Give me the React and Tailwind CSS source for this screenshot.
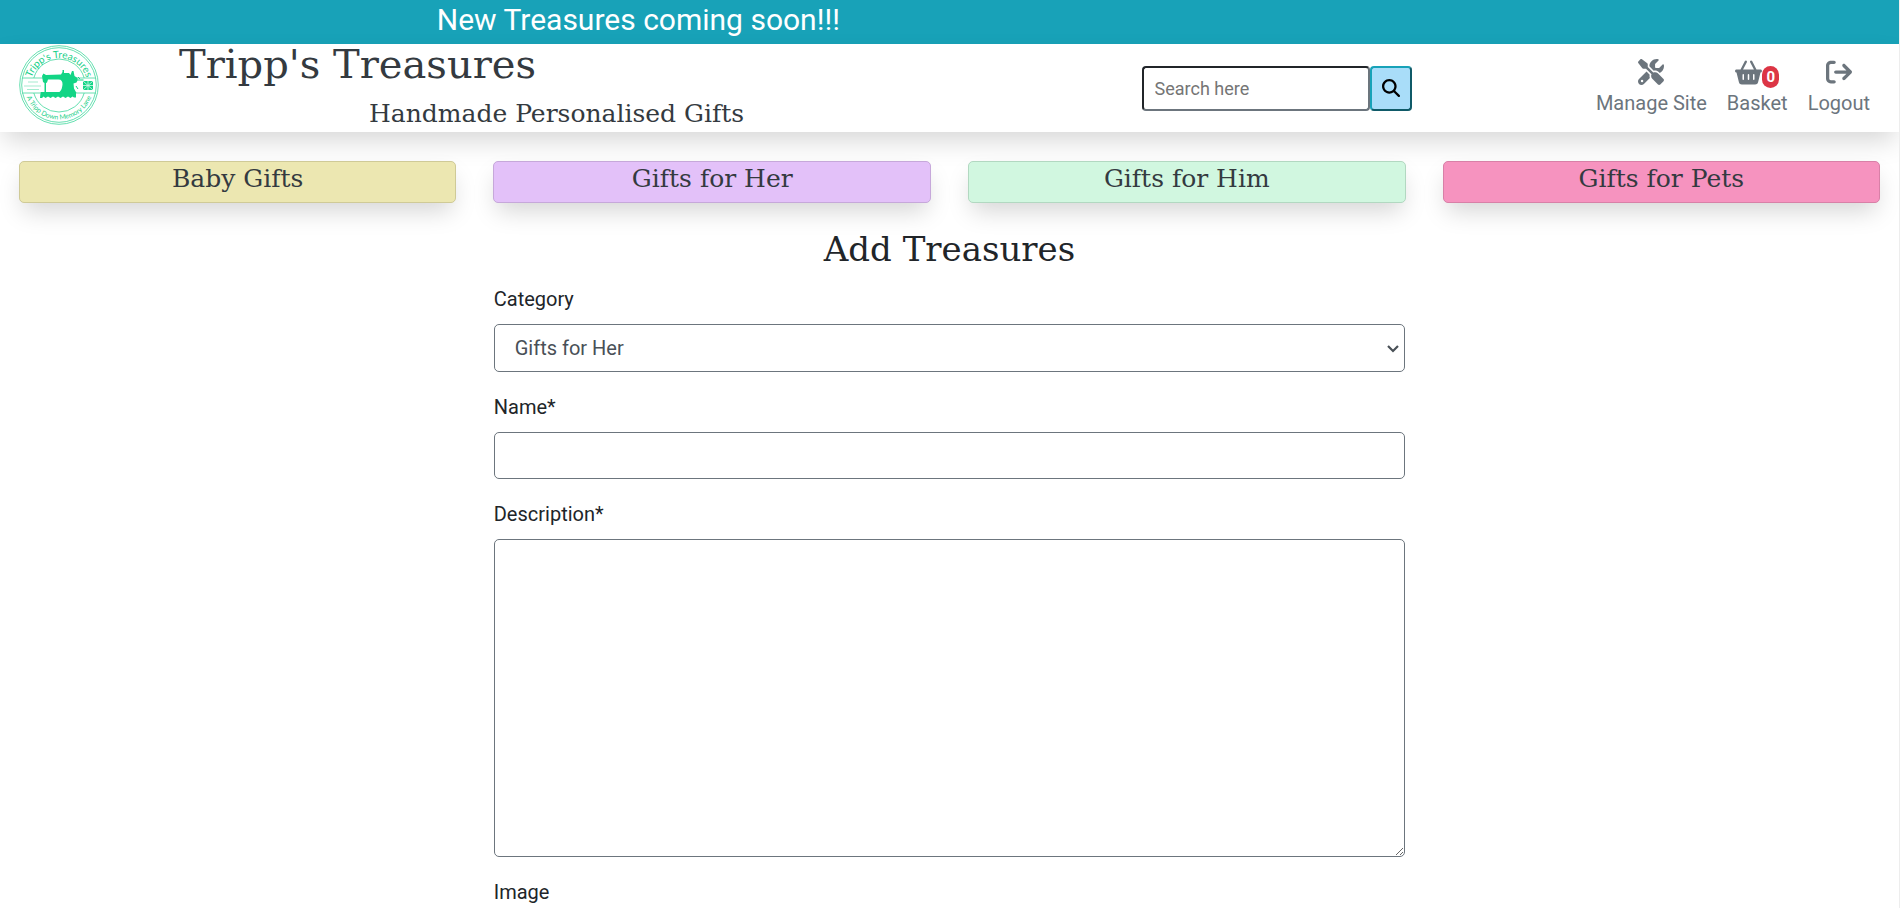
import {
  FaArrowRightFromBracket,
  FaBasketShopping,
  FaMagnifyingGlass,
  FaScrewdriverWrench,
} from 'react-icons/fa6';

const categories = [
  { name: 'Baby Gifts', style: 'bg-[#ece7b1] border-[#cfca97]' },
  { name: 'Gifts for Her', style: 'bg-[#e3c1f9] border-[#c6a8da]' },
  { name: 'Gifts for Him', style: 'bg-[#d1f7e0] border-[#b2d8c1]' },
  { name: 'Gifts for Pets', style: 'bg-[#f693bf] border-[#d880a7]' },
];

const field =
  'block w-full rounded-[5px] border border-[#6c757d] bg-white px-5 text-[20px] text-[#495057]';
const label = 'block text-[20px] leading-[30px] text-[#212529]';
const typewriter = "font-['DejaVu_Serif',serif]";

function Logo() {
  return (
    <svg viewBox="0 0 80 80" className="h-20 w-20" role="img" aria-label="Tripp's Treasures logo">
      <defs>
        <path id="logo-top" d="M11.500 46a28.800 28.800 0 1 1 57 0" />
        <path id="logo-bottom" d="M5.500 40a34.500 34.500 0 0 0 69 0" />
      </defs>
      <g fill="none" stroke="#3fd79c" strokeWidth="0.800">
        <circle cx="40" cy="40" r="39.300" />
        <circle cx="40" cy="40" r="37.300" />
        <path d="M14.800 33a26.200 26.200 0 0 1 50.400 0M14.800 48a26.200 26.200 0 0 0 50.400 0" />
        <path d="M3 33h23M3 48h18M57 33h20M57 48h20" />
      </g>
      <g fill="#a5ecd0">
        <rect x="9" y="36.500" width="10" height="1" />
        <rect x="5" y="40.500" width="17" height="1" />
        <rect x="8" y="44" width="12" height="1" />
      </g>
      <path d="M26 33h17v5l-2 8H28z" fill="#ffffff" />
      <g fill="#12d585">
        <path d="M23 31l1.500-2.500L27 30l15-0.500 1.500-2.500V25h1.500v3h5l1.500 2 1.500-4h1.500l1 5 3 2v1.500h6v1h-6l-1 2-3 1 0.500 5 2.500 4.500H38c4-1 5-4 5.500-8.500 0.200-3-1-5-4-5H29l-1 3-1 0.500V47h-1.500V38l-1.500-1z" />
        <path d="M21.500 47H57v5.500h-2l-1.500-1-2 1.500-2.500-1.500-2.500 1.500-2.500-1.500-2.500 1.500-2.500-1.500-2.500 1.500-2.500-1.500-2.500 1.500-2.500-1.500-2.500 1.500-2-1.500-1.500 1.500h-2z" />
        <path d="M64 36h10v9H64z" />
      </g>
      <path d="M59 32l2 2M57 41l2 3M53 43v3" stroke="#12d585" strokeWidth="1" />
      <path d="M64 36l10 9M74 36l-10 9M64 40.500h10M69 36v9" stroke="#d8f8ec" strokeWidth="0.800" />
      <g fill="#18cf88" fontFamily="Lato, sans-serif" textAnchor="middle">
        <text fontSize="10">
          <textPath href="#logo-top" startOffset="50%">Tripp's Treasures</textPath>
        </text>
        <text fontSize="6.800">
          <textPath href="#logo-bottom" startOffset="50%">A Tripp Down Memory Lane</textPath>
        </text>
      </g>
    </svg>
  );
}

export default function App() {
  return (
    <div className="min-h-screen overflow-x-hidden border-r border-[#ededed] bg-white font-[Roboto,sans-serif] text-[#212529]">
      <div className="bg-[#18a2b8] pb-1 pl-[23%] text-[30px] leading-[40px] text-white">
        <p>New Treasures coming soon!!!</p>
      </div>

      <header className="flex h-[88px] bg-white px-[1%] shadow-[0_12px_25px_-4px_rgba(0,0,0,0.17)]">
        <div className="flex w-[60%] items-start">
          <a href="#home" className="pt-px">
            <Logo />
          </a>
          <div className={`ml-20 text-[#343a40] ${typewriter}`}>
            <h1 className="text-[40px] leading-[40px]">Tripp's Treasures</h1>
            <p className="mt-4 pl-[190px] text-[25px] leading-[28px]">Handmade Personalised Gifts</p>
          </div>
        </div>
        <div className="flex flex-1 items-center justify-between pl-[6px]">
          <form className="flex" role="search">
            <input
              type="search"
              aria-label="Search"
              placeholder="Search here"
              className="h-[45px] w-[228px] rounded-[4px] border-2 border-t-[#212529] border-r-[#6c757d] border-b-[#6c757d] border-l-[#212529] px-[11px] text-[18px] placeholder:text-[#757575]"
            />
            <button
              type="submit"
              aria-label="Submit search"
              className="flex h-[45px] w-[42px] items-center justify-center rounded-[4px] border-2 border-t-[#17a2b8] border-r-[#0f5a68] border-b-[#0f5a68] border-l-[#17a2b8] bg-[#a9ddf9] text-black"
            >
              <FaMagnifyingGlass size={18} />
            </button>
          </form>
          <nav className="mr-[10px] flex gap-5 text-[20px] leading-[30px] text-[#6c757d]">
            <a href="#manage" className="flex flex-col items-center gap-[3px]">
              <FaScrewdriverWrench size={26} />
              Manage Site
            </a>
            <a href="#basket" className="flex flex-col items-center gap-[3px]">
              <span className="flex h-[26px] items-start">
                <FaBasketShopping size={27} />
                <span className="mt-[7px] rounded-full bg-[#dc3545] px-1 text-[15px] leading-[22px] font-bold text-white">
                  0
                </span>
              </span>
              Basket
            </a>
            <a href="#logout" className="flex flex-col items-center gap-[3px]">
              <FaArrowRightFromBracket size={26} />
              Logout
            </a>
          </nav>
        </div>
      </header>

      <nav className="mt-[29px] grid grid-cols-4 gap-[37px] px-[1%]">
        {categories.map((c) => (
          <a
            key={c.name}
            href="#category"
            className={`h-[42px] rounded-[5px] border text-center text-[25px] leading-[34px] text-[#343a40] shadow-[0_12px_25px_-4px_rgba(0,0,0,0.17)] ${typewriter} ${c.style}`}
          >
            {c.name}
          </a>
        ))}
      </nav>

      <main className="mx-auto w-[48%] pt-[26px]">
        <h2 className={`text-center text-[34px] leading-[40px] ${typewriter}`}>Add Treasures</h2>
        <form className="mt-[15px] flex flex-col gap-5">
          <div>
            <label htmlFor="category" className={label}>Category</label>
            <div className="relative mt-[10px]">
              <select id="category" className={`${field} h-[48px] appearance-none`} defaultValue="Gifts for Her">
                {categories.map((c) => (
                  <option key={c.name}>{c.name}</option>
                ))}
              </select>
              <svg
                viewBox="0 0 12 8"
                className="pointer-events-none absolute top-[21px] right-[6px] h-2 w-3"
                fill="none"
                stroke="#495057"
                strokeWidth="2.200"
              >
                <path d="M1 1l5 5 5-5" />
              </svg>
            </div>
          </div>
          <div>
            <label htmlFor="name" className={label}>Name*</label>
            <input id="name" type="text" className={`${field} mt-[10px] h-[47px]`} />
          </div>
          <div>
            <label htmlFor="description" className={label}>Description*</label>
            <textarea id="description" className={`${field} mt-[10px] h-[318px] resize`} />
          </div>
          <div>
            <label htmlFor="image" className={label}>Image</label>
            <input id="image" type="file" className="sr-only" />
          </div>
        </form>
      </main>
    </div>
  );
}
